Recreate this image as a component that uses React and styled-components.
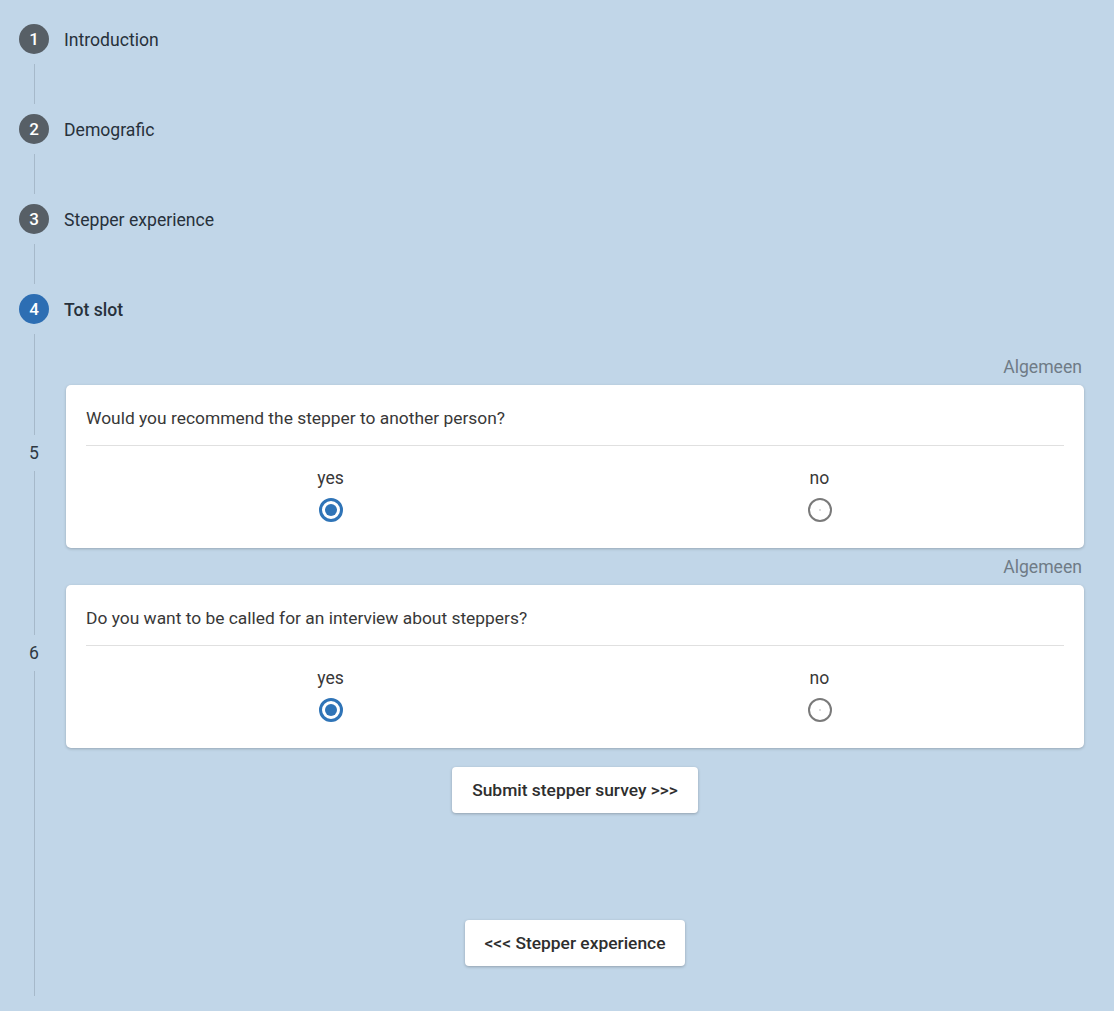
import React from 'react';
import styled, { createGlobalStyle } from 'styled-components';

const GlobalStyle = createGlobalStyle`
  html, body {
    margin: 0;
    padding: 0;
    background: #c1d6e8;
    font-family: Roboto, 'Liberation Sans', Arial, sans-serif;
  }
`;

const steps = [
  { nr: 1, title: 'Introduction' },
  { nr: 2, title: 'Demografic' },
  { nr: 3, title: 'Stepper experience' },
];

const questions = [
  { nr: 5, text: 'Would you recommend the stepper to another person?' },
  { nr: 6, text: 'Do you want to be called for an interview about steppers?' },
];

const Page = styled.div`
  padding: 24px 30px 0 19px;
  min-height: 1011px;
  box-sizing: border-box;
`;

const StepRow = styled.div`
  display: flex;
  align-items: center;
  gap: 15px;
  height: 30px;
`;

const Circle = styled.div`
  width: 30px;
  height: 30px;
  border-radius: 50%;
  background: ${(p) => (p.$active ? '#2d6eb3' : '#575f66')};
  color: #fff;
  font-size: 17px;
  font-weight: 500;
  display: flex;
  align-items: center;
  justify-content: center;
  flex-shrink: 0;
`;

const StepLabel = styled.span`
  font-size: 17.6px;
  padding-top: 2px;
  color: #27313b;
  font-weight: ${(p) => (p.$active ? 500 : 400)};
`;

const Connector = styled.div`
  width: 30px;
  height: 60px;
  padding: 10px 0;
  box-sizing: border-box;
  display: flex;
  justify-content: center;

  &::before {
    content: '';
    width: 1px;
    background: #a6b9ca;
  }
`;

const Section = styled.div`
  margin-top: 10px;
  padding: 23px 0 30px;
  display: grid;
  grid-template-columns: 30px 1fr;
  column-gap: 17px;
  row-gap: 9px;
  background-image: linear-gradient(#a6b9ca, #a6b9ca);
  background-size: 1px 100%;
  background-position: 15px 0;
  background-repeat: no-repeat;
`;

const RailNumber = styled.div`
  grid-column: 1;
  align-self: center;
  justify-self: center;
  background: #c1d6e8;
  padding: 8px 4px;
  font-size: 17.6px;
  color: #2f3942;
  line-height: 20px;
`;

const QuestionBlock = styled.div`
  grid-column: 2;
  display: flex;
  flex-direction: column;
`;

const Category = styled.div`
  text-align: right;
  padding-right: 2px;
  font-size: 17.6px;
  line-height: 20px;
  color: #6f7b86;
  margin-bottom: 8px;
`;

const Card = styled.div`
  background: #fff;
  border-radius: 5px;
  box-shadow: 0 1px 3px rgba(0, 0, 0, 0.22);
  padding: 22px 20px 0;
  height: 163px;
  box-sizing: border-box;
`;

const Question = styled.div`
  font-size: 17.4px;
  line-height: 22px;
  color: #383838;
  padding-bottom: 16px;
  border-bottom: 1px solid #e0e0e0;
`;

const Options = styled.div`
  display: grid;
  grid-template-columns: 1fr 1fr;
  padding-top: 21px;
`;

const Option = styled.label`
  display: flex;
  flex-direction: column;
  align-items: center;
  gap: 9px;
  font-size: 17.6px;
  line-height: 22px;
  color: #383838;
`;

const Radio = styled.span`
  width: 24px;
  height: 24px;
  box-sizing: border-box;
  border-radius: 50%;
  border: ${(p) => (p.$checked ? '3px solid #2f74b7' : '2.5px solid #7a7a7a')};
  display: flex;
  align-items: center;
  justify-content: center;

  &::after {
    content: '';
    width: ${(p) => (p.$checked ? '12px' : '2px')};
    height: ${(p) => (p.$checked ? '12px' : '2px')};
    border-radius: 50%;
    background: ${(p) => (p.$checked ? '#2f74b7' : '#d0d0d0')};
  }
`;

const ButtonRow = styled.div`
  grid-column: 2;
  display: flex;
  justify-content: center;
  margin-top: ${(p) => p.$top || 0}px;
`;

const Button = styled.button`
  background: #fff;
  border: none;
  border-radius: 4px;
  box-shadow: 0 1px 3px rgba(0, 0, 0, 0.25);
  height: 46px;
  padding: 0 20px;
  font-family: Roboto, 'Liberation Sans', Arial, sans-serif;
  font-size: 17.4px;
  font-weight: 500;
  color: #2e2e2e;
  cursor: pointer;
`;

const App = () => {
  return (
    <Page>
      <GlobalStyle />
      {steps.map((s) => (
        <React.Fragment key={s.nr}>
          <StepRow>
            <Circle>{s.nr}</Circle>
            <StepLabel>{s.title}</StepLabel>
          </StepRow>
          <Connector />
        </React.Fragment>
      ))}
      <StepRow>
        <Circle $active>4</Circle>
        <StepLabel $active>Tot slot</StepLabel>
      </StepRow>
      <Section>
        {questions.map((q) => (
          <React.Fragment key={q.nr}>
            <RailNumber>{q.nr}</RailNumber>
            <QuestionBlock>
              <Category>Algemeen</Category>
              <Card>
                <Question>{q.text}</Question>
                <Options>
                  <Option>
                    yes
                    <Radio $checked />
                  </Option>
                  <Option>
                    no
                    <Radio />
                  </Option>
                </Options>
              </Card>
            </QuestionBlock>
          </React.Fragment>
        ))}
        <ButtonRow $top={10}>
          <Button>Submit stepper survey &gt;&gt;&gt;</Button>
        </ButtonRow>
        <ButtonRow $top={98}>
          <Button>&lt;&lt;&lt; Stepper experience</Button>
        </ButtonRow>
      </Section>
    </Page>
  );
};

export default App;
